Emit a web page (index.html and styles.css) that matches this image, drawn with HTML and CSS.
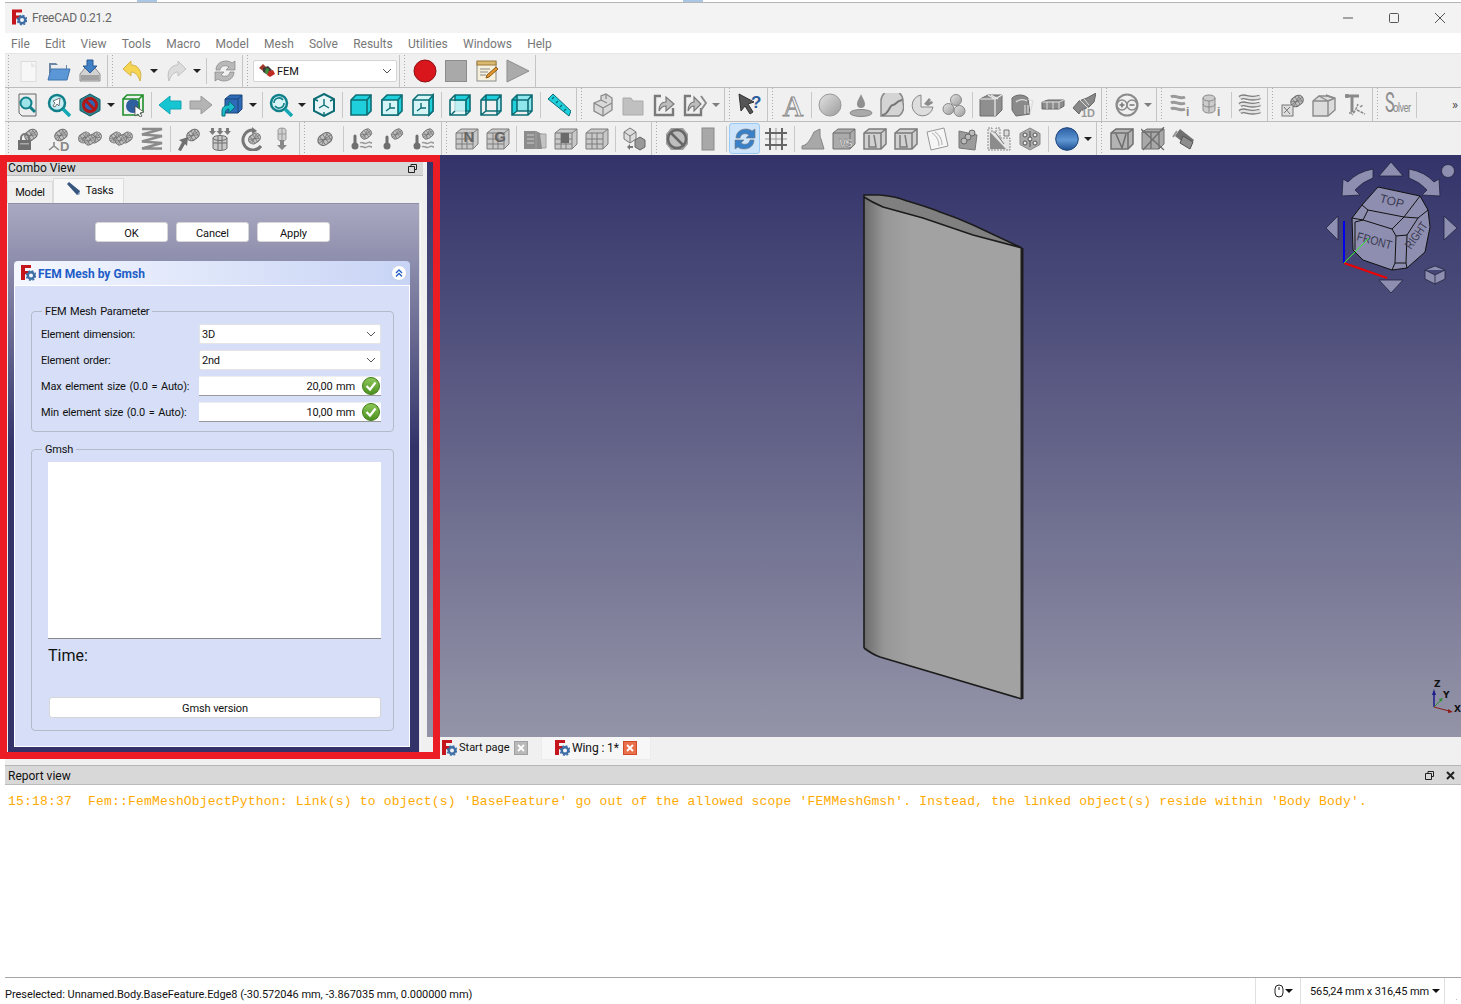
FILE: index.html
```html
<!DOCTYPE html>
<html lang="en">
<head>
<meta charset="utf-8">
<title>FreeCAD 0.21.2</title>
<link rel="stylesheet" href="styles.css">
</head>
<body>
<svg class="sprite" aria-hidden="true">
<defs>
<linearGradient id="gBall" x1="0" y1="0" x2="0" y2="1"><stop offset="0" stop-color="#2b5fa5"/><stop offset=".55" stop-color="#5f97d3"/><stop offset="1" stop-color="#1f4f92"/></linearGradient>
<linearGradient id="gGray" x1="0" y1="0" x2="1" y2="1"><stop offset="0" stop-color="#e4e4e4"/><stop offset="1" stop-color="#9a9a9a"/></linearGradient>
<linearGradient id="gOk" x1="0" y1="0" x2="0" y2="1"><stop offset="0" stop-color="#8fc95a"/><stop offset="1" stop-color="#4a8f1e"/></linearGradient>
<linearGradient id="gWing" x1="0" y1="0" x2="1" y2="0"><stop offset="0" stop-color="#6c6c6c"/><stop offset=".13" stop-color="#979797"/><stop offset=".3" stop-color="#a2a2a2"/><stop offset="1" stop-color="#a2a2a2"/></linearGradient>
</defs>
<symbol id="fc" viewBox="0 0 16 16"><path d="M1 0h10v3H5v3h4v3H5v6H1z" fill="#c4161c"/><circle cx="11" cy="10.500" r="3.200" fill="none" stroke="#3d6ea5" stroke-width="2.400"/><circle cx="11" cy="10.500" r="4.700" fill="none" stroke="#3d6ea5" stroke-width="1.400" stroke-dasharray="2 1.700"/></symbol>
<symbol id="fem" viewBox="0 0 18 16"><path d="M1 5l4-4 3 3-3 4z" fill="#a03a2a"/><path d="M5 5l5-2 4 4-4 5-5-3z" fill="#3c3c3c"/><path d="M8 5l3 1-1 6-3-2z" fill="#3f8f3a"/><path d="M11 8l4-1 2 4-5 3-3-2z" fill="#c02a22"/></symbol>
<symbol id="drop" viewBox="0 0 12 24"><path d="M2 10h8l-4 4z" fill="#222"/></symbol>
<symbol id="new" viewBox="0 0 24 24"><rect x="5" y="2.500" width="15" height="20" fill="#f7f7f7" stroke="#dcdcdc"/><path d="M15 3l5 5h-5z" fill="#e6e6e6"/></symbol>
<symbol id="open" viewBox="0 0 24 24"><path d="M2 4h7l2 2h9v8H2z" fill="#6d86a3"/><rect x="4" y="6" width="15" height="8" fill="#eee"/><path d="M1 21L4 10h19l-3 11z" fill="#5b97d6" stroke="#3f74ad"/></symbol>
<symbol id="save" viewBox="0 0 24 24"><path d="M2 15l5-6h10l5 6v7H2z" fill="#d2d2d2" stroke="#8e8e8e"/><rect x="3" y="16" width="18" height="5" fill="#a2a2a2"/><path d="M9 1h6v6h4l-7 7-7-7h4z" fill="#3f7fc4" stroke="#2a5b95"/></symbol>
<symbol id="undo" viewBox="0 0 24 24"><path d="M2 10L10 2v4c7 0 12 6 9 16-2-6-5-9-9-9v4z" fill="#f5d552" stroke="#d4b24a"/></symbol>
<symbol id="redo" viewBox="0 0 24 24"><path d="M22 10l-8-8v4C7 6 2 12 5 22c2-6 5-9 9-9v4z" fill="#dcdcdc" stroke="#c0c0c0"/></symbol>
<symbol id="sync" viewBox="0 0 24 24"><path d="M3 11C3 5 8 2 13 2c3 0 5 1 6 2l3-2v9h-9l3-3c-3-2-8-2-9 3z" fill="currentColor" stroke="#777" stroke-width=".6"/><path d="M21 13c0 6-5 9-10 9-3 0-5-1-6-2l-3 2v-9h9l-3 3c3 2 8 2 9-3z" fill="currentColor" stroke="#777" stroke-width=".6"/></symbol>
<symbol id="rec" viewBox="0 0 24 24"><circle cx="12" cy="12" r="11" fill="#d8161c" stroke="#8e1014"/></symbol>
<symbol id="stop" viewBox="0 0 24 24"><rect x="1.500" y="1.500" width="21" height="21" fill="#a9a9a9" stroke="#8c8c8c"/></symbol>
<symbol id="macro" viewBox="0 0 24 24"><rect x="2" y="3" width="19" height="19" fill="#f6f0dc" stroke="#8a8a8a"/><rect x="2" y="2" width="19" height="4" fill="#d9b870" stroke="#9b7b3b"/><path d="M5 10h10M5 13h8M5 16h6" stroke="#888"/><path d="M11 19l1-3 9-8 2 2-9 8z" fill="#e2952c" stroke="#8a5a17"/></symbol>
<symbol id="play" viewBox="0 0 24 24"><path d="M1 1l22 11L1 23z" fill="#ababab" stroke="#8d8d8d"/></symbol>
<symbol id="fitall" viewBox="0 0 24 24"><path d="M3 1h17v22H6l-3-3z" fill="#eee" stroke="#666"/><circle cx="10" cy="10" r="5.500" fill="#9fe3ea" stroke="#11808a" stroke-width="2"/><path d="M14 14l5 5" stroke="#11808a" stroke-width="3"/></symbol>
<symbol id="fitsel" viewBox="0 0 24 24"><circle cx="10" cy="10" r="8" fill="#c6eef2" stroke="#11808a" stroke-width="2.500"/><path d="M16 16l7 7" stroke="#14a7b4" stroke-width="3.500"/><path d="M13 5L6 8l2 2-2 3 2 1 2-3 2 2z" fill="#fff" stroke="#555" stroke-width=".8"/></symbol>
<symbol id="nosign" viewBox="0 0 24 24"><path d="M12 1l10 5.500v11L12 23 2 17.500v-11z" fill="#2f7f8c" stroke="#0d5f68"/><circle cx="12" cy="12" r="6.500" fill="#2f64b5" stroke="#b01818" stroke-width="3"/><path d="M7.500 7.500l9 9" stroke="#b01818" stroke-width="3"/></symbol>
<symbol id="boxz" viewBox="0 0 24 24"><circle cx="12" cy="13" r="7" fill="#2f5f9f"/><path d="M2 6h16v16H2zM2 6l4-4h16v16l-4 4M18 6l4-4" fill="none" stroke="#1f8f2a" stroke-width="1.600"/><path d="M14 13l9 6-4 1 2 3-2 1-2-3-3 2z" fill="#fff" stroke="#444" stroke-width=".8"/></symbol>
<symbol id="back" viewBox="0 0 24 24"><path d="M1 12L12 3v5h11v8H12v5z" fill="#16c4d2" stroke="#13a5b3"/></symbol>
<symbol id="fwd" viewBox="0 0 24 24"><path d="M23 12L12 3v5H1v8h11v5z" fill="#b4b4b4" stroke="#9a9a9a"/></symbol>
<symbol id="bcube" viewBox="0 0 24 24"><path d="M5 6l5-4h12v14l-4 4H5z" fill="#2d6bb8" stroke="#1c4478"/><path d="M5 6h13v14M18 6l4-4" fill="none" stroke="#1c4478"/><path d="M2 23v-5c0-4 3-6 7-6V8l6 6-6 6v-4c-3 0-4 2-4 7z" fill="#18bccb" stroke="#0d6d75"/></symbol>
<symbol id="zrot" viewBox="0 0 24 24"><circle cx="10" cy="10" r="8" fill="#d9f5f7" stroke="#11808a" stroke-width="2.500"/><path d="M16 16l7 7" stroke="#14a7b4" stroke-width="3.500"/><path d="M5 10a5 5 0 0 1 9-3M15 10a5 5 0 0 1-9 3" fill="none" stroke="#11808a" stroke-width="1.600"/></symbol>
<symbol id="iso" viewBox="0 0 24 24"><path d="M12 1l10 5v12l-10 5-10-5V6z" fill="#e9f6f7" stroke="#0d6d75" stroke-width="2"/><path d="M12 12V6M12 12l-5 3M12 12l5 3M2 6l4 2M22 6l-4 2M12 23v-4" fill="none" stroke="#0d6d75" stroke-width="1.400"/></symbol>
<symbol id="v1" viewBox="0 0 24 24"><path d="M2 7l5-5h15v16l-4 4H2z" fill="#1fd0dc" stroke="#0d6d75" stroke-width="1.600"/><path d="M2 7h16v15M18 7l4-5" fill="none" stroke="#0d6d75" stroke-width="1.600"/></symbol>
<symbol id="v2" viewBox="0 0 24 24"><path d="M2 7l5-5h15v16l-4 4H2z" fill="#1fd0dc" stroke="#0d6d75" stroke-width="1.600"/><path d="M2 7h16v15H2z" fill="#d6f5f7" stroke="#0d6d75" stroke-width="1.600"/><path d="M18 7l4-5M10 10v5l-4 3M10 15h5" fill="none" stroke="#0d6d75" stroke-width="1.400"/></symbol>
<symbol id="v3" viewBox="0 0 24 24"><path d="M2 7l5-5h15v16l-4 4H2z" fill="#d6f5f7" stroke="#0d6d75" stroke-width="1.600"/><path d="M18 7l4-5v16l-4 4z" fill="#1fd0dc" stroke="#0d6d75" stroke-width="1.600"/><path d="M2 7h16M10 10v5l-4 3M10 15h5" fill="none" stroke="#0d6d75" stroke-width="1.400"/></symbol>
<symbol id="v4" viewBox="0 0 24 24"><path d="M7 2h15v16H7z" fill="#1fd0dc"/><path d="M2 7l5-5h15v16l-4 4H2zM2 7h16v15M18 7l4-5M7 2v16h15M7 18l-5 4" fill="none" stroke="#0d6d75" stroke-width="1.600"/><rect x="3" y="8" width="14" height="13" fill="#e6f8f9" opacity=".8"/><path d="M7 18l-3 3" stroke="#0d6d75" stroke-width="1.500"/></symbol>
<symbol id="v5" viewBox="0 0 24 24"><path d="M2 7l5-5h15l-4 5z" fill="#1fd0dc"/><path d="M18 22V7l4-5v16z" fill="#a7ebf0"/><path d="M2 7l5-5h15v16l-4 4H2zM2 7h16v15M18 7l4-5M7 2v16h15M7 18l-5 4" fill="none" stroke="#0d6d75" stroke-width="1.600"/></symbol>
<symbol id="v6" viewBox="0 0 24 24"><path d="M2 7l5-5v16l-5 4z" fill="#1fd0dc"/><path d="M7 2h15v16H7z" fill="#8fe6ec"/><path d="M2 7l5-5h15v16l-4 4H2zM2 7h16v15M18 7l4-5M7 2v16h15M7 18l-5 4" fill="none" stroke="#0d6d75" stroke-width="1.600"/></symbol>
<symbol id="ruler" viewBox="0 0 24 24"><path d="M1 6l5-5 18 17-2 5z" fill="#1fd0dc" stroke="#0d6d75"/><path d="M5 6l2-2M9 10l2-2M13 14l2-2M17 18l2-2" stroke="#0d6d75" stroke-width="1.300"/></symbol>
<symbol id="part" viewBox="0 0 24 24"><path d="M4 10l7-3V3l5-2 6 4v12l-9 6-9-5z" fill="#d9d9d9" stroke="#8a8a8a" stroke-width="1.300"/><path d="M4 10l9 5v8M13 15l9-5M11 7l6 3M16 1v5" fill="none" stroke="#8a8a8a" stroke-width="1.300"/></symbol>
<symbol id="fold" viewBox="0 0 24 24"><path d="M2 5h8l2 3h10v14H2z" fill="#c0c0c0" stroke="#aaa"/></symbol>
<symbol id="exp1" viewBox="0 0 24 24"><path d="M9 3H3v19h18v-7" fill="none" stroke="#7a7a7a" stroke-width="2.400"/><path d="M7 18c0-6 3-9 7-9V4l8 7-8 7v-5c-3 0-5 1-7 5z" fill="#bdbdbd" stroke="#7a7a7a" stroke-width="1.200"/></symbol>
<symbol id="exp2" viewBox="0 0 24 24"><path d="M8 3H2v19h16v-7" fill="none" stroke="#7a7a7a" stroke-width="2.400"/><path d="M5 18c0-6 3-9 6-9V4l7 7-7 7v-5c-2 0-4 1-6 5z" fill="#bdbdbd" stroke="#7a7a7a" stroke-width="1.200"/><path d="M18 3l5 7-5 7" fill="none" stroke="#8c8c8c" stroke-width="2"/></symbol>
<symbol id="what" viewBox="0 0 24 24"><path d="M1 1l15 8-6 2 5 8-3 2-5-8-4 5z" fill="#555" stroke="#333"/></symbol>
<symbol id="sph" viewBox="0 0 24 24"><circle cx="12" cy="12" r="11" fill="url(#gGray)" stroke="#999"/></symbol>
<symbol id="dropi" viewBox="0 0 24 24"><path d="M12 1c2 5 4 7 4 10a4 4 0 0 1-8 0c0-3 2-5 4-10z" fill="#8f8f8f"/><ellipse cx="12" cy="20" rx="11" ry="3.500" fill="#a9a9a9" stroke="#888"/></symbol>
<symbol id="curve" viewBox="0 0 24 24"><path d="M1 23V8a11 11 0 0 1 22 0v2a12 12 0 0 1-4 13z" fill="#d4d4d4" stroke="#888" stroke-width="1.500"/><path d="M2 22c7 0 7-10 11-10 3 0 3-4 9-5" fill="none" stroke="#777" stroke-width="2"/></symbol>
<symbol id="pie" viewBox="0 0 24 24"><path d="M10 2a10.500 10.500 0 1 0 12 12H10z" fill="#ddd" stroke="#888"/><path d="M13 11l5-6 2 2-2 2 3-1 1 2-5 3z" fill="#8a8a8a"/></symbol>
<symbol id="tri3" viewBox="0 0 24 24"><circle cx="14" cy="7" r="5.500" fill="url(#gGray)" stroke="#888"/><circle cx="6.500" cy="16" r="5.500" fill="url(#gGray)" stroke="#888"/><circle cx="17.500" cy="18" r="5.500" fill="url(#gGray)" stroke="#888"/></symbol>
<symbol id="boxs" viewBox="0 0 24 24"><path d="M1 6l8-4h14v15l-6 6H1z" fill="#8f8f8f" stroke="#6d6d6d"/><path d="M1 6h15v17M16 6l7-4M9 2l7 4M12 2l7 4" fill="none" stroke="#eee" stroke-width="1.200"/></symbol>
<symbol id="boxf" viewBox="0 0 24 24"><path d="M2 5c4-4 12-4 16 0l2 16-14 2-4-6z" fill="#8a8a8a" stroke="#6b6b6b"/><path d="M18 6l5 2-3 13M6 9c3-3 8-3 11-1M15 12v9M18 12v8" fill="none" stroke="#ddd" stroke-width="1.200"/></symbol>
<symbol id="flat" viewBox="0 0 24 24"><path d="M1 9l6-2h16v6l-5 3H1z" fill="#8c8c8c" stroke="#666"/><path d="M1 9h17v7M18 9l5-2M6 9v7M12 9v7" fill="none" stroke="#ddd"/></symbol>
<symbol id="oned" viewBox="0 0 24 24"><path d="M1 15l6-7 8-3 9-5-2 9-5 5-8 3-2 4z" fill="#888" stroke="#666"/><path d="M8 7l8 8M12 6l5 6" stroke="#ddd"/></symbol>
<symbol id="pm" viewBox="0 0 24 24"><circle cx="12" cy="12" r="10.500" fill="none" stroke="#8a8a8a" stroke-width="2"/><circle cx="7" cy="12" r="5" fill="#efefef" stroke="#8a8a8a" stroke-width="1.500"/><circle cx="17" cy="12" r="5" fill="#efefef" stroke="#8a8a8a" stroke-width="1.500"/><path d="M4.500 12h5M7 9.500v5M14.500 12h5" stroke="#777" stroke-width="1.600"/></symbol>
<symbol id="wav" viewBox="0 0 24 24"><path d="M2 5c5-4 8 3 20-1M2 12c5-4 8 3 20-1M2 19c5-4 8 3 20-1" fill="none" stroke="#7d7d7d" stroke-width="5"/><path d="M2 5c5-4 8 3 20-1M2 12c5-4 8 3 20-1M2 19c5-4 8 3 20-1" fill="none" stroke="#e2e2e2" stroke-width="2.400"/></symbol>
<symbol id="wavi" viewBox="0 0 24 24"><path d="M1 4c4-3 8 3 14 0M1 10c4-3 8 3 14 0M1 16c4-3 8 3 14 0" fill="none" stroke="#999" stroke-width="3"/></symbol>
<symbol id="cyli" viewBox="0 0 24 24"><path d="M2 5a6 3 0 0 1 12 0v12a6 3 0 0 1-12 0z" fill="#ccc" stroke="#8a8a8a"/><path d="M2 5a6 3 0 0 0 12 0M2 11a6 3 0 0 0 12 0M8 8v11" fill="none" stroke="#8a8a8a"/></symbol>
<symbol id="m" viewBox="0 0 24 24"><g transform="rotate(-35 12 12)"><rect x="2" y="5" width="20" height="14" rx="7" fill="#c0c0c0" stroke="#6f6f6f" stroke-width="1.500"/><path d="M8 5v14M13 5v14M18 6v12M2 12h20M4 8l14 8M4 16l14-8" fill="none" stroke="#6f6f6f"/></g></symbol>
<symbol id="m2" viewBox="0 0 24 24"><use href="#m" x="-1" y="3" width="15" height="15"/><use href="#m" x="10" y="3" width="15" height="15"/><use href="#m" x="5" y="6" width="14" height="14"/></symbol>
<symbol id="mlock" viewBox="0 0 24 24"><use href="#m" x="7" y="0" width="16" height="16"/><path d="M5 14v-3a4 4 0 0 1 8 0v3" fill="none" stroke="#777" stroke-width="2"/><rect x="2" y="13" width="13" height="10" fill="#6f6f6f"/><rect x="4" y="16" width="9" height="1.500" fill="#aaa"/></symbol>
<symbol id="mD" viewBox="0 0 24 24"><use href="#m" x="6" y="0" width="16" height="16"/><path d="M7 15v4M7 19l-5 4M7 19l5 4" stroke="#888" stroke-width="1.600"/></symbol>
<symbol id="spring" viewBox="0 0 24 24"><path d="M2 2h20L2 7.500 22 9 2 14.500 22 16 2 21.500h20" fill="none" stroke="#8b8b8b" stroke-width="2.500"/></symbol>
<symbol id="marrow" viewBox="0 0 24 24"><use href="#m" x="8" y="0" width="16" height="16"/><path d="M1 23l4-8-3-2 9-3-1 9-2-2-4 7z" fill="#6f6f6f"/></symbol>
<symbol id="mdown" viewBox="0 0 24 24"><path d="M3 1h3v3h2L4.500 8 1 4h2zM10.500 1h3v3h2L12 8 8.500 4h2zM18 1h3v3h2l-3.500 4L16 4h2z" fill="#7c7c7c"/><path d="M5 11a7 2.500 0 0 1 14 0v10a7 2.500 0 0 1-14 0z" fill="#c8c8c8" stroke="#6f6f6f"/><path d="M5 16h14M10 9v14M14 9v14M5 11a7 2.500 0 0 0 14 0" fill="none" stroke="#6f6f6f"/></symbol>
<symbol id="mrot" viewBox="0 0 24 24"><path d="M14 3a10 10 0 1 0 8 16" fill="none" stroke="#777" stroke-width="3"/><path d="M13 0v7l5-3z" fill="#777"/><use href="#m" x="8" y="4" width="15" height="15"/></symbol>
<symbol id="mcyl" viewBox="0 0 24 24"><path d="M8 3a4 2 0 0 1 8 0v9a4 2 0 0 1-8 0z" fill="#d0d0d0" stroke="#999"/><path d="M8 7h8M12 1v13" stroke="#999"/><path d="M10 13h4v5h3l-5 5-5-5h3z" fill="#888"/></symbol>
<symbol id="mone" viewBox="0 0 24 24"><use href="#m" x="3" y="3" width="18" height="18"/></symbol>
<symbol id="thw" viewBox="0 0 24 24"><use href="#m" x="9" y="0" width="14" height="14"/><path d="M5 9v7" stroke="#6f6f6f" stroke-width="3" stroke-linecap="round"/><circle cx="5" cy="19" r="3.500" fill="#6f6f6f"/><path d="M10 16c3-2 4 2 7 0s3 0 5 0M10 20c3-2 4 2 7 0s3 0 5 0" fill="none" stroke="#999" stroke-width="1.500"/></symbol>
<symbol id="th" viewBox="0 0 24 24"><use href="#m" x="9" y="0" width="14" height="14"/><path d="M6 10v7" stroke="#6f6f6f" stroke-width="3" stroke-linecap="round"/><circle cx="6" cy="19" r="3.500" fill="#6f6f6f"/></symbol>
<symbol id="lat" viewBox="0 0 24 24"><path d="M1 6l5-4h17v15l-5 5H1z" fill="#c8c8c8" stroke="#7d7d7d"/><path d="M1 6h17v16M18 6l5-4M1 12h17M1 17h17M7 6v16M12 6v16" fill="none" stroke="#7d7d7d"/></symbol>
<symbol id="cbox" viewBox="0 0 24 24"><path d="M1 4h12l6 3v15H1z" fill="#8c8c8c"/><path d="M13 4v18M17 7h6v14h-4" fill="#c4c4c4" stroke="#a0a0a0"/><path d="M4 8h7M4 12h7M4 16h7" stroke="#ccc"/></symbol>
<symbol id="ccore" viewBox="0 0 24 24"><use href="#lat"/><rect x="7" y="6" width="8" height="10" fill="#6a6a6a"/></symbol>
<symbol id="cube2" viewBox="0 0 24 24"><path d="M2 5l6-4 6 4v7l-6 4-6-4z" fill="#ddd" stroke="#777"/><path d="M2 5l6 4 6-4M8 9v7" fill="none" stroke="#777"/><path d="M13 13l5-3 5 3v7l-5 3-5-3z" fill="#999" stroke="#666"/><path d="M5 20l3-3v2h3v2H8v2z" fill="#777"/></symbol>
<symbol id="nob" viewBox="0 0 24 24"><path d="M6 1h12l5 6v10l-5 6H6l-5-6V7z" fill="#9c9c9c"/><circle cx="12" cy="12" r="9" fill="#bdbdbd" stroke="#666" stroke-width="2.500"/><path d="M6 6l12 12" stroke="#666" stroke-width="2.500"/></symbol>
<symbol id="rectg" viewBox="0 0 24 24"><rect x="6" y="1" width="12" height="22" fill="#a8a8a8" stroke="#8a8a8a"/></symbol>
<symbol id="grid" viewBox="0 0 24 24"><path d="M1 12h22M12 1v22" stroke="#999" stroke-width="1"/><path d="M6 1v22M18 1v22M1 6h22M1 18h22" stroke="#666" stroke-width="2"/></symbol>
<symbol id="cur" viewBox="0 0 24 24"><path d="M1 22v-3c6-1 9-8 12-14l6-3c0 6 0 8 1 10l3 10z" fill="#a8a8a8" stroke="#858585"/></symbol>
<symbol id="vs" viewBox="0 0 24 24"><path d="M1 6l5-4h17v15l-5 5H1z" fill="#ababab" stroke="#6f6f6f"/><path d="M1 6h17v16M18 6l5-4" fill="none" stroke="#6f6f6f"/></symbol>
<symbol id="wire" viewBox="0 0 24 24"><path d="M1 6l5-4h17v15l-5 5H1z" fill="#d0d0d0" stroke="#7a7a7a" stroke-width="1.500"/><path d="M1 6h17v16M18 6l5-4M6 8v12h7l-2-12" fill="none" stroke="#7a7a7a" stroke-width="1.500"/></symbol>
<symbol id="sheet" viewBox="0 0 24 24"><path d="M2 5l17-4 4 18-17 4z" fill="#f6f6f6" stroke="#999"/><path d="M7 6c5 3 7 8 7 13M10 5c5 3 7 8 7 13" fill="none" stroke="#aaa"/></symbol>
<symbol id="sheetm" viewBox="0 0 24 24"><path d="M3 4l18 4-2 15-16-2z" fill="#9b9b9b" stroke="#777"/><circle cx="16" cy="6" r="3" fill="#bbb" stroke="#666"/><circle cx="12" cy="10" r="3" fill="#bbb" stroke="#666"/><circle cx="8" cy="14" r="3" fill="#bbb" stroke="#666"/></symbol>
<symbol id="stamp" viewBox="0 0 24 24"><path d="M1 1h4v4h4V1h4v10h10v12H1z" fill="#e6e6e6" stroke="#888" stroke-dasharray="2 1"/><path d="M3 5l16 17H3z" fill="#8c8c8c"/><path d="M17 3h5v6h-5z" fill="#ddd" stroke="#777"/><path d="M8 5l9 12" stroke="#777"/></symbol>
<symbol id="hexn" viewBox="0 0 24 24"><path d="M12 1l10 5.500v11L12 23 2 17.500v-11z" fill="#aaa" stroke="#8a8a8a"/><circle cx="12" cy="12" r="2" fill="#eee" stroke="#555"/><circle cx="7" cy="8" r="2" fill="#eee" stroke="#555"/><circle cx="17" cy="8" r="2" fill="#eee" stroke="#555"/><circle cx="7" cy="16" r="2" fill="#eee" stroke="#555"/><circle cx="17" cy="16" r="2" fill="#eee" stroke="#555"/><path d="M12 4v6M12 14v6" stroke="#555"/></symbol>
<symbol id="ball" viewBox="0 0 24 24"><circle cx="12" cy="12" r="11.300" fill="url(#gBall)" stroke="#1b3f78"/></symbol>
<symbol id="wb" viewBox="0 0 24 24"><path d="M1 6l5-4h17v15l-5 5H1z" fill="#b4b4b4" stroke="#6f6f6f" stroke-width="1.500"/><path d="M1 6h17v16M18 6l5-4M6 7l6 14 4-14" fill="none" stroke="#6f6f6f" stroke-width="1.500"/></symbol>
<symbol id="wb2" viewBox="0 0 24 24"><path d="M1 5l5-3h17v15l-5 5H1z" fill="#a8a8a8" stroke="#6f6f6f"/><path d="M1 5h17v17M18 5l5-3M0 2l23 21M23 0L2 23M10 5v17" fill="none" stroke="#6f6f6f" stroke-width="1.300"/></symbol>
<symbol id="cam" viewBox="0 0 24 24"><path d="M3 9l5-7 14 11-5 7z" fill="#6f6f6f"/><path d="M11 9l10 6-3 7-10-6z" fill="#8d8d8d" stroke="#555"/><path d="M1 10l4-6" stroke="#999" stroke-width="2"/></symbol>
<symbol id="tcr" viewBox="0 0 24 24"><path d="M2 3h14M9 3v16M4 1v4" stroke="#8a8a8a" stroke-width="3" fill="none"/><path d="M6 20h4l3-4 2-5M14 17l8 4M12 18l-3 4M17 14l3-2" stroke="#8a8a8a" stroke-width="1.500" stroke-dasharray="3 1" fill="none"/></symbol>
<symbol id="mbox" viewBox="0 0 24 24"><use href="#m" x="8" y="0" width="16" height="16"/><rect x="1" y="12" width="11" height="11" fill="#ddd" stroke="#777"/><path d="M3 14l6 7M3 20l6-6" stroke="#777"/></symbol>
<symbol id="boxl" viewBox="0 0 24 24"><path d="M1 8l6-5h8l8 2v12l-7 6H1z" fill="#dcdcdc" stroke="#8a8a8a" stroke-width="1.400"/><path d="M1 8h15v15M16 8l7-3M7 3l9 5M14 2l8 3" fill="none" stroke="#8a8a8a" stroke-width="1.400"/></symbol>
</svg>

<div class="app">
  <div class="topline"><span class="seg seg-a"></span><span class="seg seg-b"></span></div>
  <header class="titlebar">
    <svg class="fc-title"><use href="#fc"/></svg>
    <span class="title-text">FreeCAD 0.21.2</span>
    <span class="winbtns">
      <svg class="wb" viewBox="0 0 12 12"><path d="M1 6h10" class="wl"/></svg>
      <svg class="wb" viewBox="0 0 12 12"><rect x="1.500" y="1.500" width="9" height="9" rx="1" class="wl"/></svg>
      <svg class="wb" viewBox="0 0 12 12"><path d="M1 1l10 10M11 1L1 11" class="wl"/></svg>
    </span>
  </header>
  <nav class="menubar">
    <span>File</span><span>Edit</span><span>View</span><span>Tools</span><span>Macro</span><span>Model</span><span>Mesh</span><span>Solve</span><span>Results</span><span>Utilities</span><span>Windows</span><span>Help</span>
  </nav>

  <div class="tbrow r1">
    <div class="tb first"><b class="b"><svg class="i"><use href="#new"/></svg></b><b class="b"><svg class="i"><use href="#open"/></svg></b><b class="b"><svg class="i"><use href="#save"/></svg></b></div>
    <div class="tb"><b class="b"><svg class="i"><use href="#undo"/></svg></b><b class="d"><svg class="a"><use href="#drop"/></svg></b><b class="b"><svg class="i"><use href="#redo"/></svg></b><b class="d"><svg class="a"><use href="#drop"/></svg></b><i class="s"></i><b class="b gy"><svg class="i"><use href="#sync"/></svg></b></div>
    <div class="tb"><div class="wbcombo"><svg class="wbic"><use href="#fem"/></svg><span>FEM</span><svg class="chev" viewBox="0 0 10 6"><path d="M1 1l4 4 4-4"/></svg></div></div>
    <div class="tb"><b class="b"><svg class="i"><use href="#rec"/></svg></b><b class="b"><svg class="i"><use href="#stop"/></svg></b><b class="b"><svg class="i"><use href="#macro"/></svg></b><b class="b"><svg class="i"><use href="#play"/></svg></b></div>
  </div>

  <div class="tbrow r2">
    <div class="tb first"><b class="b"><svg class="i"><use href="#fitall"/></svg></b><b class="b"><svg class="i"><use href="#fitsel"/></svg></b><b class="b"><svg class="i"><use href="#nosign"/></svg></b><b class="d"><svg class="a"><use href="#drop"/></svg></b><b class="b"><svg class="i"><use href="#boxz"/></svg></b><i class="s"></i><b class="b"><svg class="i"><use href="#back"/></svg></b><b class="b"><svg class="i"><use href="#fwd"/></svg></b><b class="b"><svg class="i"><use href="#bcube"/></svg></b><b class="d"><svg class="a"><use href="#drop"/></svg></b><i class="s"></i><b class="b"><svg class="i"><use href="#zrot"/></svg></b><b class="d"><svg class="a"><use href="#drop"/></svg></b><b class="b"><svg class="i"><use href="#iso"/></svg></b><i class="s"></i><b class="b"><svg class="i"><use href="#v1"/></svg></b><b class="b"><svg class="i"><use href="#v2"/></svg></b><b class="b"><svg class="i"><use href="#v3"/></svg></b><i class="s"></i><b class="b"><svg class="i"><use href="#v4"/></svg></b><b class="b"><svg class="i"><use href="#v5"/></svg></b><b class="b"><svg class="i"><use href="#v6"/></svg></b><i class="s"></i><b class="b"><svg class="i"><use href="#ruler"/></svg></b></div>
    <div class="tb"><b class="b"><svg class="i"><use href="#part"/></svg></b><b class="b"><svg class="i"><use href="#fold"/></svg></b><b class="b"><svg class="i"><use href="#exp1"/></svg></b><b class="b"><svg class="i"><use href="#exp2"/></svg></b><b class="d"><svg class="a ag"><use href="#drop"/></svg></b></div>
    <div class="tb"><b class="b"><svg class="i"><use href="#what"/><text x="13" y="15" class="it itq">?</text></svg></b></div>
    <div class="tb"><b class="b"><svg class="i"><text x="12" y="23" class="it ita">A</text></svg></b><i class="s"></i><b class="b"><svg class="i"><use href="#sph"/></svg></b><b class="b"><svg class="i"><use href="#dropi"/></svg></b><b class="b"><svg class="i"><use href="#curve"/></svg></b><b class="b"><svg class="i"><use href="#pie"/></svg></b><b class="b"><svg class="i"><use href="#tri3"/></svg></b><i class="s"></i><b class="b"><svg class="i"><use href="#boxs"/></svg></b><b class="b"><svg class="i"><use href="#boxf"/></svg></b><b class="b"><svg class="i"><use href="#flat"/></svg></b><b class="b"><svg class="i"><use href="#oned"/><text x="9" y="23.500" class="it itd">1D</text></svg></b></div>
    <div class="tb"><b class="b"><svg class="i"><use href="#pm"/></svg></b><b class="d"><svg class="a ag"><use href="#drop"/></svg></b></div>
    <div class="tb"><b class="b"><svg class="i"><use href="#wavi"/><text x="16" y="23" class="it iti">i</text></svg></b><b class="b"><svg class="i"><use href="#cyli"/><text x="16" y="23" class="it iti">i</text></svg></b><i class="s"></i><b class="b"><svg class="i"><use href="#wav"/></svg></b></div>
    <div class="tb"><b class="b"><svg class="i"><use href="#mbox"/></svg></b><b class="b"><svg class="i"><use href="#boxl"/></svg></b><b class="b"><svg class="i"><use href="#tcr"/></svg></b></div>
    <div class="tb last"><b class="b solver"><span class="sv-s">S</span><span class="sv-r">olver</span></b><i class="s"></i><span class="more">»</span></div>
  </div>

  <div class="tbrow r3">
    <div class="tb first"><b class="b"><svg class="i"><use href="#mlock"/></svg></b><b class="b"><svg class="i"><use href="#mD"/><text x="13" y="23.500" class="it itD">D</text></svg></b><b class="b"><svg class="i"><use href="#m2"/></svg></b><b class="b"><svg class="i"><use href="#m2"/></svg></b><b class="b"><svg class="i"><use href="#spring"/></svg></b><i class="s"></i><b class="b"><svg class="i"><use href="#marrow"/></svg></b><b class="b"><svg class="i"><use href="#mdown"/></svg></b><b class="b"><svg class="i"><use href="#mrot"/></svg></b><b class="b"><svg class="i"><use href="#mcyl"/></svg></b></div>
    <div class="tb"><b class="b"><svg class="i"><use href="#mone"/></svg></b><i class="s"></i><b class="b"><svg class="i"><use href="#thw"/></svg></b><b class="b"><svg class="i"><use href="#th"/></svg></b><b class="b"><svg class="i"><use href="#thw"/></svg></b></div>
    <div class="tb"><b class="b"><svg class="i"><use href="#lat"/><text x="14" y="15" class="it itN">N</text></svg></b><b class="b"><svg class="i"><use href="#lat"/><text x="14" y="15" class="it itN">G</text></svg></b><i class="s"></i><b class="b"><svg class="i"><use href="#cbox"/></svg></b><b class="b"><svg class="i"><use href="#ccore"/></svg></b><b class="b"><svg class="i"><use href="#lat"/></svg></b><i class="s"></i><b class="b"><svg class="i"><use href="#cube2"/></svg></b></div>
    <div class="tb"><b class="b"><svg class="i"><use href="#nob"/></svg></b><b class="b"><svg class="i"><use href="#rectg"/></svg></b><i class="s"></i><b class="b on bl"><svg class="i"><use href="#sync"/></svg></b><b class="b"><svg class="i"><use href="#grid"/></svg></b><i class="s"></i><b class="b"><svg class="i"><use href="#cur"/></svg></b><b class="b"><svg class="i"><use href="#vs"/><text x="7" y="20" class="it itV">VS</text></svg></b><b class="b"><svg class="i"><use href="#wire"/></svg></b><b class="b"><svg class="i"><use href="#wire"/></svg></b><b class="b"><svg class="i"><use href="#sheet"/></svg></b><b class="b"><svg class="i"><use href="#sheetm"/></svg></b><b class="b"><svg class="i"><use href="#stamp"/></svg></b><b class="b"><svg class="i"><use href="#hexn"/></svg></b><i class="s"></i><b class="b"><svg class="i"><use href="#ball"/></svg></b><b class="d"><svg class="a"><use href="#drop"/></svg></b></div>
    <div class="tb last"><b class="b"><svg class="i"><use href="#wb"/></svg></b><b class="b"><svg class="i"><use href="#wb2"/></svg></b><b class="b"><svg class="i"><use href="#cam"/></svg></b></div>
  </div>

  <main class="main">
    <section class="dock">
      <div class="dock-title"><span>Combo View</span><svg class="undock" viewBox="0 0 9 9"><path d="M3 2.500V.500h5.500v5H6.500M.500 2.500h6v6h-6z" class="dl"/></svg></div>
      <div class="tabs">
        <span class="tab">Model</span>
        <span class="tab active"><svg class="pen" viewBox="0 0 16 16"><path d="M1 3l2-2 11 9v3l-3 1z" fill="#36557f"/><path d="M11 14l3-1v-3" fill="#9fb4cf"/></svg>Tasks</span>
      </div>
      <div class="taskwrap">
        <div class="task">
          <div class="actions"><button class="btn">OK</button><button class="btn">Cancel</button><button class="btn">Apply</button></div>
          <div class="panel">
            <div class="panel-head"><svg class="fc-head"><use href="#fc"/></svg><span>FEM Mesh by Gmsh</span><svg class="collapse" viewBox="0 0 16 16"><circle cx="8" cy="8" r="7.500" class="cc"/><path d="M5 8l3-3 3 3M5 11.500l3-3 3 3" class="ca"/></svg></div>
            <div class="panel-body">
              <fieldset class="group g1">
                <legend>FEM Mesh Parameter</legend>
                <div class="row"><label>Element dimension:</label><div class="sel"><span>3D</span><svg class="chev" viewBox="0 0 10 6"><path d="M1 1l4 4 4-4"/></svg></div></div>
                <div class="row"><label>Element order:</label><div class="sel"><span>2nd</span><svg class="chev" viewBox="0 0 10 6"><path d="M1 1l4 4 4-4"/></svg></div></div>
                <div class="row"><label>Max element size (0.0 = Auto):</label><div class="num"><span>20,00 mm</span><svg class="ok" viewBox="0 0 18 18"><circle cx="9" cy="9" r="8.500" class="okc"/><path d="M4.500 9l3.500 3.500 5.500-7" class="okt"/></svg></div></div>
                <div class="row"><label>Min element size (0.0 = Auto):</label><div class="num"><span>10,00 mm</span><svg class="ok" viewBox="0 0 18 18"><circle cx="9" cy="9" r="8.500" class="okc"/><path d="M4.500 9l3.500 3.500 5.500-7" class="okt"/></svg></div></div>
              </fieldset>
              <fieldset class="group g2">
                <legend>Gmsh</legend>
                <div class="output"></div>
                <div class="time">Time:</div>
                <button class="btn wide">Gmsh version</button>
              </fieldset>
            </div>
          </div>
        </div>
        <div class="gutter"></div>
      </div>
    </section>
    <section class="center">
      <div class="viewport">
        <svg class="wing" viewBox="0 0 180 520">
          <path d="M4 3H20C30 4 40 6 47 9C60 13 70 16 80 20C92 24 102 28 113 33L162 56L113 43L63 26L23 15L4 5Z" fill="#808080"/>
          <path d="M4 5L23 15L63 26L113 43L162 56V507L20 465C14 463 8 459 4 456Z" fill="url(#gWing)"/>
          <path d="M4 456V3H20C30 4 40 6 47 9C60 13 70 16 80 20C92 24 102 28 113 33L162 56M4 5C10 9 16 12 23 15L63 26L113 43L162 56M4 456C8 459 14 463 20 465L162 507" fill="none" stroke="#1c1c1c" stroke-width="1.600"/>
          <path d="M162 56V507" stroke="#1c1c1c" stroke-width="3"/>
        </svg>
        <svg class="navcube" viewBox="0 0 151 150">
          <g class="nv">
            <path d="M69 21L81 7L93 21Z"/><circle cx="138" cy="16" r="6.500"/>
            <path d="M63 14Q47 17 38 27L33 24L32 41L50 40L45 35Q52 27 63 23Z"/>
            <path d="M99 14Q115 17 124 27L129 24L130 41L112 40L117 35Q110 27 99 23Z"/>
            <path d="M16 73L28 61V85Z"/><path d="M134 61L147 73L134 85Z"/><path d="M69 125H93L81 138Z"/>
            <path d="M115 115L125 111L135 115V124L125 129L115 124ZM115 115L125 120L135 115M125 120V129"/>
          </g>
          <g class="nc">
            <path d="M68 32L110 41L118 55L120 72L115 97L97 113L82 115L53 105L43 95L42 63L52 50Z"/>
            <path d="M52 50L58 55L94 62L110 41M58 55L53 65L42 63M53 65L82 74L94 62M53 65L45 67L45 95M82 74L86 81L85 108L82 115M86 81L97 80L96 108L85 108M96 108L97 113M97 80L108 63L118 55M108 63L94 62"/>
          </g>
          <text class="nt" transform="translate(69 47) rotate(15)">TOP</text>
          <text class="nt" textLength="36" lengthAdjust="spacingAndGlyphs" transform="translate(46 85) rotate(15)">FRONT</text>
          <text class="nt" textLength="30" lengthAdjust="spacingAndGlyphs" transform="translate(101 95) rotate(-55)">RIGHT</text>
          <path d="M34 66V108" class="ax ab"/><path d="M34 108L77 123" class="ax ar"/><path d="M34 108L59 83" class="ax ag2"/>
        </svg>
        <svg class="mini" viewBox="0 0 40 40">
          <path d="M13 18V30" class="mb"/><path d="M13 12l-2 6h4z" class="mbf"/><path d="M13 30L20 23" class="mg"/><path d="M22 21l-4 1 2 3z" class="mgf"/><path d="M13 30L28 34" class="mr"/><path d="M32 35l-5-3v4z" class="mrf"/>
          <text x="13" y="10" class="ml">Z</text><text x="22" y="21" class="ml">Y</text><text x="33" y="35" class="ml">X</text>
        </svg>
      </div>
      <div class="subtabs">
        <span class="st"><svg class="fc-tab"><use href="#fc"/></svg><span class="st-l">Start page</span><svg class="cl" viewBox="0 0 14 14"><rect x=".500" y=".500" width="13" height="13" class="clg"/><path d="M4 4l6 6M10 4l-6 6" class="clx"/></svg></span>
        <span class="st act"><svg class="fc-tab"><use href="#fc"/></svg><span class="st-l">Wing : 1*</span><svg class="cl" viewBox="0 0 14 14"><rect x=".500" y=".500" width="13" height="13" class="clr"/><path d="M4 4l6 6M10 4l-6 6" class="clx"/></svg></span>
      </div>
    </section>
  </main>

  <section class="report">
    <div class="report-title"><span>Report view</span><span class="rp-btns"><svg class="undock" viewBox="0 0 9 9"><path d="M3 2.500V.500h5.500v5H6.500M.500 2.500h6v6h-6z" class="dl"/></svg><svg class="rpx" viewBox="0 0 9 9"><path d="M1 1l7 7M8 1L1 8" class="dlx"/></svg></span></div>
    <div class="log">15:18:37  Fem::FemMeshObjectPython: Link(s) to object(s) 'BaseFeature' go out of the allowed scope 'FEMMeshGmsh'. Instead, the linked object(s) reside within 'Body Body'.</div>
  </section>

  <footer class="status">
    <span class="st-msg">Preselected: Unnamed.Body.BaseFeature.Edge8 (-30.572046 mm, -3.867035 mm, 0.000000 mm)</span>
    <span class="st-cell mouse"><svg class="ms" viewBox="0 0 10 14"><rect x="1" y="1" width="8" height="12" rx="4" class="msr"/><path d="M5 3v3" class="msr"/></svg><svg class="tri" viewBox="0 0 8 4"><path d="M0 0h8L4 4z"/></svg></span>
    <span class="st-cell dims"><span>565,24 mm x 316,45 mm</span><svg class="tri" viewBox="0 0 8 4"><path d="M0 0h8L4 4z"/></svg></span>
    <span class="st-cell gripc"></span>
  </footer>

  <div class="annot"></div>
</div>
</body>
</html>
```
FILE: styles.css
```css
* { box-sizing: border-box; }
html, body { margin: 0; padding: 0; background: #fff; }
body { font-family: Roboto, "Liberation Sans", sans-serif; font-size: 12px; color: #111; overflow: hidden; }
.sprite { position: absolute; width: 0; height: 0; }
.app { position: relative; width: 1461px; height: 1004px; padding-left: 5px; display: flex; flex-direction: column; overflow: hidden; }

.topline { height: 3px; flex: none; display: flex; border-bottom: 1px solid #b5b5b5; border-top-left-radius: 6px; background: #fff; }
.seg { width: 20px; height: 2px; background: #a9c6e4; }
.seg-a { margin-left: 132px; }
.seg-b { margin-left: 526px; }

.titlebar { height: 30px; flex: none; background: #f3f3f3; display: flex; align-items: center; padding-left: 6px; color: #666; font-size: 12px; letter-spacing: -.25px; }
.fc-title { width: 16px; height: 17px; margin-right: 5px; margin-top: -1px; }
.title-text { margin-top: -1px; }
.winbtns { margin-left: auto; display: flex; }
.wb { width: 12px; height: 12px; margin: -1px 15px 0 0; }
.wb:nth-child(1), .wb:nth-child(2) { margin-right: 34px; }
.wl { fill: none; stroke: #555; stroke-width: 1; }

.menubar { height: 21px; flex: none; background: #fff; border-bottom: 1px solid #e6e6e6; display: flex; align-items: center; color: #777; padding: 2px 0 0 1px; }
.menubar span { padding: 0 5px; margin-right: 5.200px; }

.tbrow { height: 34px; flex: none; display: flex; align-items: stretch; background: #f0f0f0; border-bottom: 1px solid #bdbdbd; }
.r1 { padding-top: 1px; }
.r3 { height: 33px; border-bottom: 0; }
.tb { display: flex; align-items: center; padding: 0 2px 0 9px; border-right: 1px solid #c4c4c4; background-image: radial-gradient(#aaa 0.6px, transparent 0.8px); background-size: 3px 3px; background-repeat: repeat-y; background-position: 3px 5px; }
.tb.first { padding-left: 7px; background-position: 2px 5px; }
.tb.last { border-right: 0; flex: 1; }
.b { width: 31px; height: 31px; flex: none; display: flex; align-items: center; justify-content: center; font-weight: 400; background: #f0f0f0; }
.d { width: 12px; height: 24px; flex: none; display: block; background: #f0f0f0; }
.s { width: 6px; height: 26px; flex: none; display: block; background: linear-gradient(#c8c8c8, #c8c8c8) center/1px 100% no-repeat #f0f0f0; }
.i { width: 24px; height: 24px; display: block; overflow: visible; }
.a { width: 12px; height: 24px; display: block; }
.ag { opacity: .55; }
.gy { color: #b9b9b9; }
.bl { color: #3a80c8; }
.on { background: #cde4fb; border: 1px solid #99c9f5; border-radius: 3px; }
.it { font-family: "Liberation Sans", sans-serif; }
.itq { font-size: 17px; font-weight: 700; fill: #2c5c9c; }
.ita { font-family: "Liberation Serif", serif; font-size: 29px; text-anchor: middle; fill: #f4f4f4; stroke: #888; stroke-width: .9; }
.itd { font-size: 11px; font-weight: 700; fill: #999; }
.iti { font-size: 12px; font-weight: 700; fill: #888; }
.itD { font-size: 13px; font-weight: 700; fill: #888; }
.itN { font-size: 15px; font-weight: 700; fill: #666; text-anchor: middle; }
.itV { font-size: 11px; font-weight: 700; fill: #eee; stroke: #666; stroke-width: .4; letter-spacing: -1px; }
.wbcombo { width: 144px; height: 22px; margin: 0 0 0 1px; background: #fff; border: 1px solid #d4d4d4; border-radius: 2px; display: flex; align-items: center; padding-left: 4px; font-size: 11px; letter-spacing: -.1px; color: #111; }
.wbic { width: 18px; height: 16px; margin-right: 1px; }
.chev { width: 10px; height: 6px; margin-left: auto; margin-right: 4px; }
.chev path { fill: none; stroke: #555; stroke-width: 1; }
.solver { align-items: baseline; justify-content: center; color: #8c8c8c; padding-top: 2px; }
.sv-s { font-size: 27px; line-height: 24px; transform: scaleX(.6); width: 10px; }
.sv-r { font-size: 12px; letter-spacing: -.8px; transform: scaleX(.8); transform-origin: left; width: 20px; }
.more { margin-left: auto; margin-right: 1px; color: #444; font-size: 13px; }

.main { height: 610px; flex: none; display: flex; }
.dock { width: 422px; flex: none; display: flex; flex-direction: column; background: #f0f0f0; }
.dock-title { height: 21px; flex: none; padding: 7px 0 0 3px; margin-right: 4px; background: #d8d8d8; border-bottom: 1px solid #b9b9b9; display: flex; align-items: center; justify-content: space-between; line-height: 13px; }
.undock { width: 9px; height: 9px; margin-right: 6px; }
.dl { fill: none; stroke: #222; stroke-width: 1; }
.dlx { fill: none; stroke: #222; stroke-width: 2; }
.tabs { height: 27px; flex: none; display: flex; align-items: flex-end; padding-left: 2px; font-size: 11px; letter-spacing: -.2px; }
.tab { height: 22px; width: 46px; display: flex; align-items: center; justify-content: center; background: #f0f0f0; border: 1px solid #dcdcdc; border-bottom: 0; }
.tab.active { height: 25px; width: 71px; background: #f7f7f7; padding: 0 0 2px 2px; }
.pen { width: 16px; height: 16px; margin: 0 4px 3px 0; }
.taskwrap { height: 552px; flex: none; display: flex; padding-left: 3px; }
.task { width: 411px; height: 552px; flex: none; background: linear-gradient(#a9a9c1 0, #33336a 44%, #33336a 100%); border-top: 1px solid #8f8fa8; padding-top: 18px; }
.gutter { width: 2px; background: #f8f8f8; border-left: 1px solid #e2e2e2; }
.actions { display: flex; gap: 8px; padding-left: 87px; }
.btn { font: 11px Roboto, "Liberation Sans", sans-serif; letter-spacing: -.1px; color: #111; width: 73px; height: 20px; padding: 2px 0 0; background: #fff; border: 1px solid #d6d6d6; border-radius: 3px; }
.panel { margin: 19px 0 0 6px; width: 396px; }
.panel-head { height: 25px; border-radius: 4px 4px 0 0; background: linear-gradient(90deg, #f4f7ff, #c8d4f5); border-bottom: 1px solid #fff; display: flex; align-items: center; padding: 1px 0 0 6px; font-weight: 700; color: #215dc6; font-size: 12px; }
.fc-head { width: 16px; height: 16px; margin: -1px 2px 0 0; }
.collapse { width: 16px; height: 16px; margin: -1px 3px 0 auto; }
.cc { fill: #fff; stroke: #c5d0ee; }
.ca { fill: none; stroke: #215dc6; stroke-width: 1.300; }
.panel-body { height: 461px; background: #d6dff7; border: 1px solid #fff; border-top: 0; padding: 17px 15px 0 16px; display: flex; flex-direction: column; font-size: 11px; letter-spacing: -.2px; word-spacing: 1.200px; }
.group { margin: 0; border: 1px solid #b5bac8; border-radius: 4px; padding: 0; min-width: 0; }
.group legend { padding: 2px 3px 0; font-size: 11px; line-height: 14px; }
.g1 { height: 129px; padding: 5px 12px 0 9px; }
.g1 legend { margin-left: 1px; }
.row { display: flex; align-items: center; height: 20px; margin-bottom: 6px; }
.row label { width: 158px; flex: none; white-space: nowrap; }
.sel { width: 182px; height: 20px; background: #fff; border: 1px solid #e4e4e4; border-radius: 2px; display: flex; align-items: center; padding-left: 2px; }
.num { width: 183px; height: 20px; background: #fff; border-top: 1px solid #eee; border-bottom: 1px solid #999; display: flex; align-items: center; justify-content: flex-end; padding-right: 1px; }
.ok { width: 18px; height: 18px; margin-left: 7px; }
.okc { fill: url(#gOk); stroke: #3f7d1a; }
.okt { fill: none; stroke: #fff; stroke-width: 2.200; }
.g2 { height: 290px; margin-top: 9px; padding: 5px 12px 0 16px; }
.g2 legend { margin-left: -6px; }
.output { width: 333px; height: 177px; background: #fff; border-bottom: 1px solid #888; }
.time { font-size: 16px; letter-spacing: 0; margin-top: 7px; line-height: 20px; height: 51px; }
.wide { width: 332px; height: 21px; margin-left: 1px; display: block; }

.center { flex: 1; display: flex; flex-direction: column; min-width: 0; }
.viewport { height: 582px; flex: none; position: relative; background: linear-gradient(#33336a, #9494a8); }
.wing { position: absolute; left: 433px; top: 37px; width: 180px; height: 520px; }
.navcube { position: absolute; right: 0; top: 0; width: 151px; height: 150px; }
.nv path, .nv circle { fill: #8e8eb0; stroke: #22223f; stroke-width: .8; }
.nc path { fill: #8e8eb0; stroke: #111; stroke-width: 1; }
.nc path + path { fill: none; }
.nt { font: 12px "Liberation Sans", sans-serif; fill: #3a3a50; }
.ax { fill: none; stroke-width: 2; }
.ab { stroke: #0000ee; }
.ar { stroke: #ee0000; }
.ag2 { stroke: #33ee33; stroke-width: 1; }
.mini { position: absolute; right: 0; top: 522px; width: 40px; height: 40px; }
.mb { stroke: #1c1c8c; stroke-width: 1.500; }
.mbf { fill: #1c1c8c; }
.mg { stroke: #2a8f2a; }
.mgf { fill: #2a8f2a; }
.mr { stroke: #8c1c1c; }
.mrf { fill: #8c1c1c; }
.ml { font: bold 9px "DejaVu Sans", sans-serif; fill: #111; }
.subtabs { height: 28px; flex: none; background: #f0f0f0; display: flex; padding-left: 14px; align-items: flex-start; }
.st { height: 21px; display: flex; align-items: center; font-size: 11px; width: 100px; }
.st .cl { margin-left: 4px; }
.st-l { white-space: nowrap; }
.st.act { height: 23px; width: 110px; background: #f7f7f7; border: 1px solid #ececec; border-top: 0; padding-left: 12px; font-size: 12px; letter-spacing: -.1px; }
.fc-tab { width: 16px; height: 16px; margin-right: 2px; }
.cl { width: 14px; height: 14px; }
.clg { fill: #b9b9b9; stroke: #a0a0a0; }
.clr { fill: #e8704a; stroke: #cf4a26; }
.clx { fill: none; stroke: #fff; stroke-width: 1.800; }

.report { flex: 1; display: flex; flex-direction: column; min-height: 0; }
.report-title { height: 20px; flex: none; background: #d8d8d8; border-top: 1px solid #b5b5b5; border-bottom: 1px solid #bbb; display: flex; justify-content: space-between; align-items: center; padding: 1px 6px 0 3px; }
.rp-btns { display: flex; align-items: center; }
.rp-btns .undock { margin-right: 12px; }
.rpx { width: 9px; height: 9px; }
.log { font: 13px "Liberation Mono", monospace; letter-spacing: .193px; color: #ffaa00; white-space: pre; padding: 9px 0 0 3px; line-height: 15px; }

.status { height: 27px; flex: none; border-top: 1px solid #a5a5a5; display: flex; align-items: center; background: #fff; }
.st-msg { flex: 1; font-size: 11px; letter-spacing: -.05px; padding-top: 6px; }
.st-cell { height: 26px; display: flex; align-items: center; border-left: 1px solid #e0e0e0; }
.mouse { width: 45px; padding-left: 18px; }
.ms { width: 10px; height: 14px; margin-right: 1px; }
.msr { fill: none; stroke: #222; stroke-width: 1; }
.tri { width: 8px; height: 4px; fill: #111; }
.dims { width: 144px; padding-left: 9px; font-size: 11px; letter-spacing: -.1px; white-space: nowrap; }
.dims .tri { margin-left: 3px; }
.gripc { width: 17px; background-image: radial-gradient(#bbb 0.7px, transparent 0.9px); background-size: 3px 3px; background-repeat: no-repeat; background-position: right 3px bottom 3px; }

.annot { position: absolute; left: 0; top: 155px; width: 440px; height: 604px; border: 7px solid #ec1c24; pointer-events: none; }
```
